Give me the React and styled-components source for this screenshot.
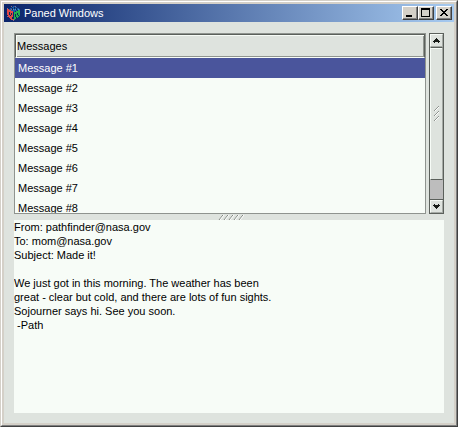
import React, { useState } from "react";
import styled, { createGlobalStyle } from "styled-components";

const GlobalStyle = createGlobalStyle`
  *, *::before, *::after { box-sizing: border-box; }
  body { margin: 0; font-family: "Liberation Sans", Arial, sans-serif; font-size: 11px; color: #000; }
`;

const WindowFrame = styled.main`
  display: flex;
  min-height: 100vh;
  border: 1px solid;
  border-color: #d4d0c8 #404040 #404040 #d4d0c8;
`;

const WindowBevel = styled.div`
  display: flex;
  flex: 1;
  min-width: 0;
  flex-direction: column;
  border: 1px solid;
  border-color: #fff #808080 #808080 #fff;
  outline: 2px solid #d4d0c8;
  outline-offset: -3px;
  padding: 2px;
  background: #dee3de;
`;

const TitleBar = styled.header`
  display: flex;
  align-items: center;
  height: 18px;
  padding: 0 2px;
  background: linear-gradient(to right, #0a246a, #a6caf0);
`;

const Title = styled.h1`
  flex: 1;
  margin: 0 0 0 2px;
  color: #fff;
  font-size: 11px;
  line-height: 18px;
  font-weight: normal;
`;

const CaptionButton = styled.button`
  display: flex;
  width: 16px;
  height: 14px;
  margin-left: ${(p) => (p.$apart ? "2px" : "0")};
  padding: 0;
  border: 1px solid;
  border-color: #fff #404040 #404040 #fff;
  box-shadow: inset -1px -1px #808080;
  background: #d4d0c8;
`;

const Client = styled.div`
  display: flex;
  flex: 1;
  flex-direction: column;
  padding: 11px 10px 10px;
`;

const ListPane = styled.section`
  display: flex;
  gap: 3px;
  height: 181px;
`;

const ListFrame = styled.div`
  flex: 1;
  min-width: 0;
  overflow: hidden;
  border: 1px solid #8f948f;
  background: #f7fcf7;
`;

const MessageTable = styled.table`
  width: 100%;
  border-collapse: separate;
  border-spacing: 0;
`;

const HeaderCell = styled.th`
  height: 24px;
  padding: 0 1px;
  border: 1px solid;
  border-color: #5b605b #5b605b #f7fcf7 #5b605b;
  box-shadow: inset 1px 1px #f7fcf7, inset -1px -1px #8f948f;
  background: #dee3de;
  font-weight: normal;
  text-align: left;
`;

const MessageCell = styled.td`
  height: 20px;
  padding: 0 3px;
  line-height: 20px;
  cursor: default;
  background: ${(p) => (p.$selected ? "#4a559c" : "transparent")};
  color: ${(p) => (p.$selected ? "#fff" : "#000")};
`;

const Scrollbar = styled.div`
  display: flex;
  flex-direction: column;
  width: 15px;
  border: 1px solid #5b605b;
  background: #bdbdbd;
`;

const StepButton = styled.button`
  display: flex;
  align-items: center;
  justify-content: center;
  height: 13px;
  padding: 0;
  border: 1px solid;
  border-color: #f7fcf7 #a5aaa5 #a5aaa5 #f7fcf7;
  background: #dee3de;
`;

const Thumb = styled.div`
  display: flex;
  align-items: center;
  justify-content: center;
  height: 133px;
  border: 1px solid;
  border-color: #5b605b #a5aaa5 #5b605b #f7fcf7;
  box-shadow: inset 0 1px #f7fcf7;
  background: #dee3de;
`;

const Track = styled.div`
  flex: 1;
  border-bottom: 1px solid #5b605b;
`;

const Splitter = styled.div`
  display: flex;
  align-items: center;
  justify-content: center;
  height: 6px;
  padding-left: 4px;
  cursor: row-resize;
`;

const MessageText = styled.textarea`
  flex: 1;
  width: 100%;
  min-height: 140px;
  padding: 0;
  border: 0;
  outline: 0;
  resize: none;
  background: #f7fcf7;
  color: #000;
  font: 11px/14px "Liberation Sans", Arial, sans-serif;
`;

const Drawing = styled.svg`
  display: block;
  flex: none;
`;

const AppIcon = () => (
  <Drawing width="16" height="16" viewBox="0 0 16 16" shapeRendering="crispEdges" aria-hidden="true">
    <path d="M7 1h2v1h2v1h2v1h1v1h-3v1H9v1H7V6H5V5H3V4h1V3h2V2h1z" fill="#1c5aa8" />
    <path d="M1 4h2v1h2v1h2v9H5v-1H4v-1H3v-1H2v-2H1z" fill="#e04848" />
    <path d="M8 7h2V6h2V5h2v6h-1v1h-1v1h-2v1H9v1H8z" fill="#20b050" />
    <path d="M6 3h1v2H6zM8 2h1v2H8zM10 3h1v2h-1zM3 7h1v3H3zM4 10h1v1H4zM5 8h1v2H5zM6 12h1v2H6zM9 9h1v3H9zM11 8h1v2h-1zM12 10h1v1h-1zM10 12h1v1h-1z" fill="#0c2858" />
    <path d="M5 1h1v1H5zM1 3h1v1H1zM5 4h1v1H5zM9 1h1v1H9zM1 11h1v1H1zM7 14h1v2H7z" fill="#8c7084" />
    <path d="M7 4h1v1H7zM9 4h1v1H9zM12 4h1v1h-1z" fill="#4c9cd0" />
  </Drawing>
);

const CaptionGlyph = ({ d }) => (
  <Drawing width="14" height="12" viewBox="0 0 14 12" shapeRendering="crispEdges" aria-hidden="true">
    <path d={d} fill="#000" />
  </Drawing>
);

const StepGlyph = ({ down }) => (
  <Drawing width="7" height="5" viewBox="0 0 7 5" shapeRendering="crispEdges" aria-hidden="true">
    <path d={down ? "M0 1h1V0h1v1h3V0h1v1h1v1H6v1H5v1H4v1H3V4H2V3H1V2H0z" : "M3 0h1v1h1v1h1v1h1v1H6v1H5V4H2v1H1V4H0V3h1V2h1V1h1z"} fill="#181c18" />
  </Drawing>
);

const ThumbGrip = () => (
  <Drawing width="7" height="17" viewBox="0 0 7 17" aria-hidden="true">
    <path d="M1 6l5-5M1 11l5-5M1 16l5-5" stroke="#8f948f" />
    <path d="M2 6l4-4M2 11l4-4M2 16l4-4" stroke="#fff" />
  </Drawing>
);

const SplitGrip = () => (
  <Drawing width="26" height="5" viewBox="0 0 26 5" aria-hidden="true">
    <path d="M1 5l4-5M6 5l4-5M11 5l4-5M16 5l4-5M21 5l4-5" stroke="#7b807b" />
    <path d="M2 5l4-5M7 5l4-5M12 5l4-5M17 5l4-5M22 5l4-5" stroke="#fff" />
  </Drawing>
);

const captionButtons = [
  { label: "Minimize", d: "M3 8h6v2H3z" },
  { label: "Maximize", d: "M2 1h9v9H2zM3 3v6h7V3z" },
  { label: "Close", d: "M3 2h2v1h1v1h2V3h1V2h2v1h-1v1H9v1H8v1h1v1h1v1h1v1H9V8H8V7H6v1H5v1H3V8h1V7h1V6h1V5H5V4H4V3H3z", apart: true },
];

const messages = Array.from({ length: 8 }, (_, i) => `Message #${i + 1}`);

const body = `From: pathfinder@nasa.gov
To: mom@nasa.gov
Subject: Made it!

We just got in this morning. The weather has been
great - clear but cold, and there are lots of fun sights.
Sojourner says hi. See you soon.
 -Path`;

export default function App() {
  const [selected, setSelected] = useState(0);
  return (
    <>
      <GlobalStyle />
      <WindowFrame>
        <WindowBevel>
          <TitleBar>
            <AppIcon />
            <Title>Paned Windows</Title>
            {captionButtons.map((b) => (
              <CaptionButton key={b.label} type="button" aria-label={b.label} $apart={b.apart}>
                <CaptionGlyph d={b.d} />
              </CaptionButton>
            ))}
          </TitleBar>
          <Client>
            <ListPane>
              <ListFrame>
                <MessageTable>
                  <thead>
                    <tr><HeaderCell scope="col">Messages</HeaderCell></tr>
                  </thead>
                  <tbody>
                    {messages.map((m, i) => (
                      <tr key={m} aria-selected={i === selected} onClick={() => setSelected(i)}>
                        <MessageCell $selected={i === selected}>{m}</MessageCell>
                      </tr>
                    ))}
                  </tbody>
                </MessageTable>
              </ListFrame>
              <Scrollbar>
                <StepButton type="button" aria-label="Scroll up"><StepGlyph /></StepButton>
                <Thumb><ThumbGrip /></Thumb>
                <Track />
                <StepButton type="button" aria-label="Scroll down"><StepGlyph down /></StepButton>
              </Scrollbar>
            </ListPane>
            <Splitter role="separator" aria-orientation="horizontal"><SplitGrip /></Splitter>
            <MessageText aria-label="Message text" defaultValue={body} spellCheck={false} />
          </Client>
        </WindowBevel>
      </WindowFrame>
    </>
  );
}
